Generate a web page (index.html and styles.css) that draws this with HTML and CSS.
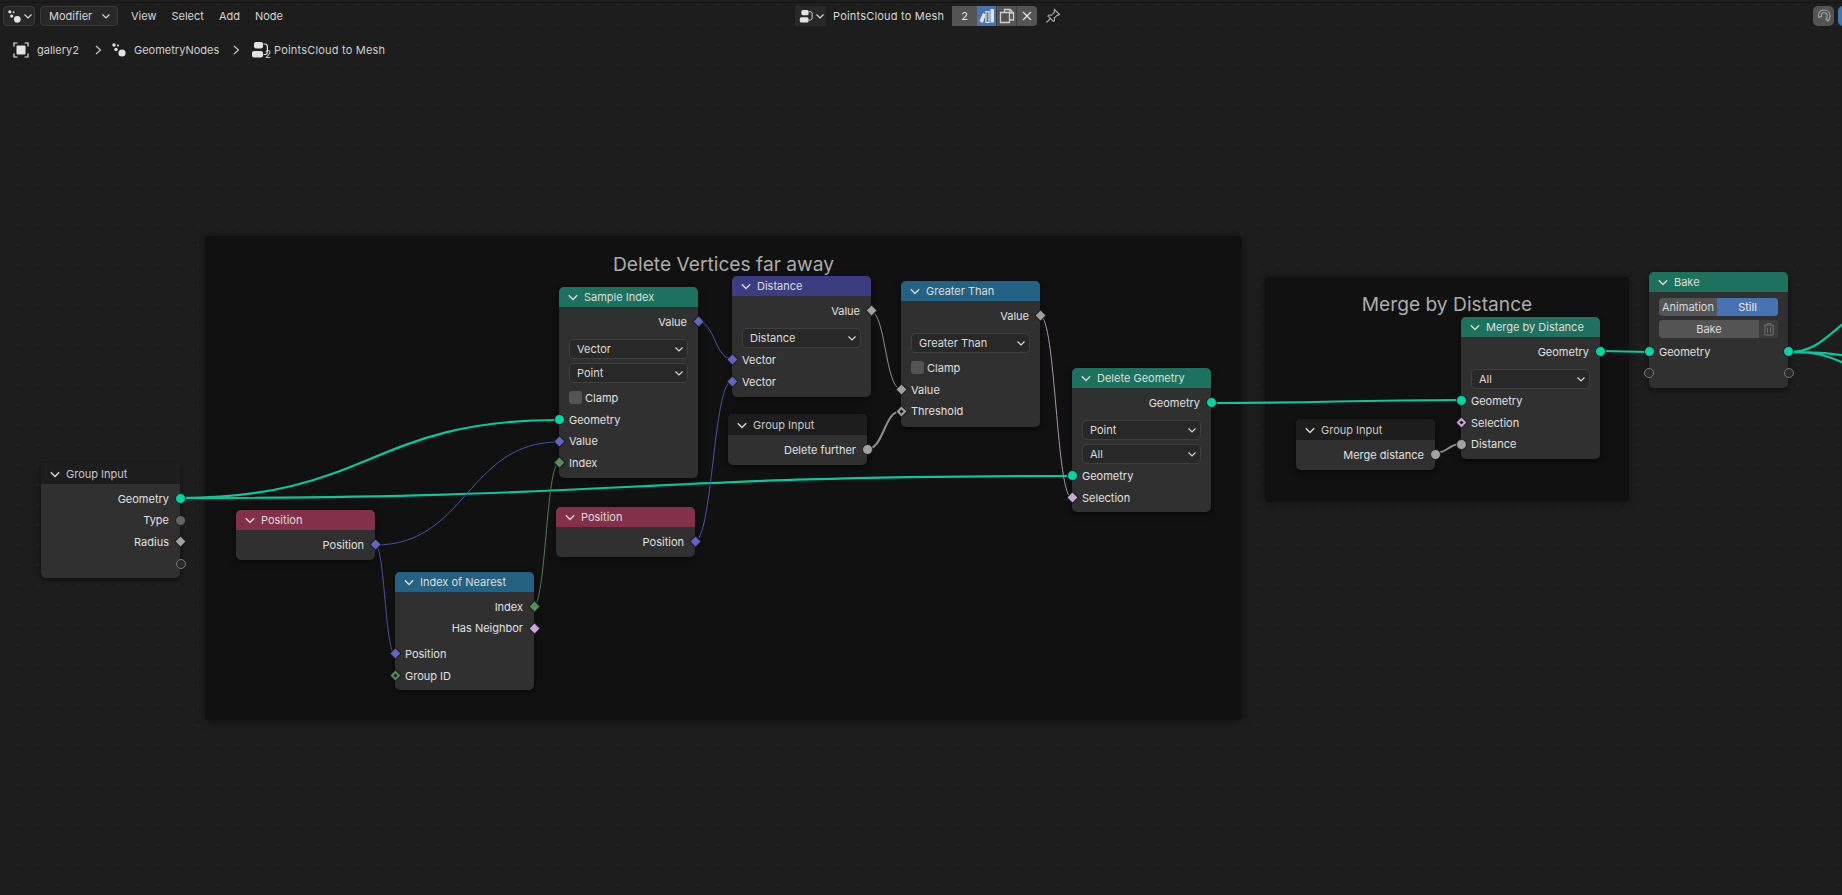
FILE: index.html
```html
<!DOCTYPE html>
<html lang="en">
<head>
    <meta charset="UTF-8">
    <title>PointsCloud to Mesh</title>
    <link rel="stylesheet" href="styles.css">
</head>
<body>
    <svg class="defs" width="0" height="0">
        <symbol id="ico-nodes" viewBox="0 0 16 16">
            <circle cx="3" cy="3" r="1.7"/>
            <circle cx="7" cy="3.400" r="1"/>
            <circle cx="5" cy="7.500" r="1.700"/>
            <circle cx="11" cy="11" r="3.600"/>
        </symbol>
        <symbol id="ico-group" viewBox="0 0 20 18">
            <rect x="3" y="1" width="9" height="6.500" rx="2"/>
            <rect x="1" y="10" width="11" height="6.500" rx="2"/>
            <path class="ico-line" d="M12.500 3h1.500c1.500 0 2.400 1 2.400 3v4c0 2-1 3.500-2.400 3.500h-1.500"/>
        </symbol>
        <symbol id="ico-chev" viewBox="0 0 10 10">
            <path class="ico-line" d="M1.500 3.500L5 7l3.500-3.500"/>
        </symbol>
        <symbol id="ico-next" viewBox="0 0 10 10">
            <path class="ico-line" d="M3 1l4.500 4L3 9"/>
        </symbol>
    </svg>

    <div class="canvas">
        <div class="topbar">
            <div class="btn editor-btn">
                <svg class="ico16"><use href="#ico-nodes"/></svg>
                <svg class="chev"><use href="#ico-chev"/></svg>
            </div>
            <div class="btn mode-btn">
                <span>Modifier</span>
                <svg class="chev"><use href="#ico-chev"/></svg>
            </div>
            <nav class="menu">
                <span>View</span>
                <span>Select</span>
                <span>Add</span>
                <span>Node</span>
            </nav>
            <div class="picker">
                <div class="pick-icon">
                    <svg class="ico-grp"><use href="#ico-group"/></svg>
                    <svg class="chev"><use href="#ico-chev"/></svg>
                </div>
                <div class="pick-name">PointsCloud to Mesh</div>
                <div class="pick-count">2</div>
                <div class="pick-asset">
                    <svg width="16" height="16" viewBox="0 0 16 16">
                        <path class="fill-w" d="M.5 12.500L4 5l2 1v3l-2 5.500h-2z"/>
                        <path class="line-w" d="M7 3.500h3v11h-3z"/>
                        <path class="fill-w" d="M11.500 1h3.500v13.500h-3.500z"/>
                    </svg>
                </div>
                <div class="pick-tool">
                    <svg width="16" height="16" viewBox="0 0 16 16">
                        <path class="line-g thick" d="M5.500 4.500v-3h5.500l3.500 3.500v7h-3.500"/>
                        <path class="line-g thick" d="M11 1.500v3.500h3.500"/>
                        <path class="line-g thick" d="M1.500 4.500h9v10h-9z"/>
                    </svg>
                </div>
                <div class="pick-tool pick-x">
                    <svg width="12" height="12" viewBox="0 0 12 12">
                        <path class="line-w" d="M2 2l8 8M10 2l-8 8"/>
                    </svg>
                </div>
            </div>
            <svg class="pin" width="16" height="16" viewBox="0 0 16 16">
                <path class="line-g" d="M9.500 1.500l5 5-1.200.8-1-.3-3 3 .2 2.500-1 1-5.500-5.500 1-1 2.500.2 3-3-.3-1zM5.500 10.500L1.500 14.500"/>
            </svg>
            <div class="snap-btn">
                <svg width="16" height="16" viewBox="0 0 16 16">
                    <path class="line-g" d="M3 9.500c-1.500-4 1-7.500 5-7.500 3.500 0 6 2.500 6 6 0 2-.8 3.800-2 5l-2-2c.8-.8 1.200-1.900 1.200-3 0-2-1.500-3.200-3.200-3.200-2.200 0-3 1.700-2.400 3.500z"/>
                </svg>
            </div>
            <div class="blue-btn"></div>
        </div>

        <div class="crumbs">
            <svg class="crumb-obj" width="16" height="16" viewBox="0 0 16 16">
                <path class="line-w" d="M1 4.500V1h3.500M11.500 1H15v3.500M15 11.500V15h-3.500M4.500 15H1v-3.500"/>
                <rect class="fill-w" x="3.500" y="3.500" width="9" height="9" rx="1"/>
            </svg>
            <span class="crumb-a">gallery2</span>
            <svg class="crumb-next"><use href="#ico-next"/></svg>
            <svg class="ico16"><use href="#ico-nodes"/></svg>
            <span class="crumb-b">GeometryNodes</span>
            <svg class="crumb-next"><use href="#ico-next"/></svg>
            <span class="crumb-grp">
                <svg class="ico-grp"><use href="#ico-group"/></svg>
                <em>2</em>
            </span>
            <span class="crumb-c">PointsCloud to Mesh</span>
        </div>

        <div class="frame frame-delete"><h2>Delete Vertices far away</h2></div>
        <div class="frame frame-merge"><h2>Merge by Distance</h2></div>

        <svg class="wires" width="1842" height="895" viewBox="0 0 1842 895">
            <g class="w-geo">
                <path d="M180 498C370 498 370 420 559 420"/>
                <path d="M180 498C626 498 626 476 1072 476"/>
                <path d="M1211 403C1336 403 1336 400 1461 400"/>
                <path d="M1600 351C1625 351 1625 352 1649 352"/>
                <path d="M1788 352C1815 352 1825 338 1850 318"/>
                <path d="M1788 352C1815 352 1825 353 1850 356"/>
                <path d="M1788 352C1815 352 1825 354 1850 366"/>
            </g>
            <g class="w-vec">
                <path d="M375 545C467 545 467 442 559 442"/>
                <path d="M375 545C385 545 385 654 395 654"/>
                <path d="M698 322C715 322 715 359 732 359"/>
                <path d="M694 542C713 542 713 381 732 381"/>
            </g>
            <path class="w-int" d="M533 607C546 607 546 463 559 463"/>
            <path class="w-flt" d="M870 311C886 311 885 389 901 389"/>
            <path class="w-flt thick" d="M867 449C884 449 884 411 901 411"/>
            <path class="w-flt thick" d="M1435 453C1448 453 1448 444 1461 444"/>
            <path class="w-sel" d="M1040 316C1056 316 1056 498 1072 498"/>
        </svg>

        <div class="node n-input1">
            <div class="head h-input"><svg class="chev"><use href="#ico-chev"/></svg>Group Input</div>
            <div class="body">
                <div class="row out"><span>Geometry</span><i class="sock r geo"></i></div>
                <div class="row out"><span>Type</span><i class="sock r str"></i></div>
                <div class="row out"><span>Radius</span><i class="sock r dia flt"></i></div>
                <div class="row out"><i class="sock r empty"></i></div>
            </div>
        </div>

        <div class="node n-pos1">
            <div class="head h-attr"><svg class="chev"><use href="#ico-chev"/></svg>Position</div>
            <div class="body">
                <div class="row out"><span>Position</span><i class="sock r dia vec"></i></div>
            </div>
        </div>

        <div class="node n-nearest">
            <div class="head h-conv"><svg class="chev"><use href="#ico-chev"/></svg>Index of Nearest</div>
            <div class="body">
                <div class="row out"><span>Index</span><i class="sock r dia int"></i></div>
                <div class="row out"><span>Has Neighbor</span><i class="sock r dia bool"></i></div>
                <div class="row gap"><i class="sock l dia vec"></i><span>Position</span></div>
                <div class="row"><i class="sock l dia int dot"></i><span>Group ID</span></div>
            </div>
        </div>

        <div class="node n-sample">
            <div class="head h-geo"><svg class="chev"><use href="#ico-chev"/></svg>Sample Index</div>
            <div class="body">
                <div class="row out"><span>Value</span><i class="sock r dia vec"></i></div>
                <div class="select first">Vector<svg class="chev"><use href="#ico-chev"/></svg></div>
                <div class="select">Point<svg class="chev"><use href="#ico-chev"/></svg></div>
                <div class="row check"><b></b><span>Clamp</span></div>
                <div class="row"><i class="sock l geo"></i><span>Geometry</span></div>
                <div class="row"><i class="sock l dia vec"></i><span>Value</span></div>
                <div class="row"><i class="sock l dia int"></i><span>Index</span></div>
            </div>
        </div>

        <div class="node n-dist">
            <div class="head h-vec"><svg class="chev"><use href="#ico-chev"/></svg>Distance</div>
            <div class="body tall">
                <div class="row out"><span>Value</span><i class="sock r dia flt"></i></div>
                <div class="select first">Distance<svg class="chev"><use href="#ico-chev"/></svg></div>
                <div class="row after"><i class="sock l dia vec"></i><span>Vector</span></div>
                <div class="row"><i class="sock l dia vec"></i><span>Vector</span></div>
            </div>
        </div>

        <div class="node n-greater">
            <div class="head h-conv"><svg class="chev"><use href="#ico-chev"/></svg>Greater Than</div>
            <div class="body tall">
                <div class="row out"><span>Value</span><i class="sock r dia flt"></i></div>
                <div class="select first">Greater Than<svg class="chev"><use href="#ico-chev"/></svg></div>
                <div class="row check"><b></b><span>Clamp</span></div>
                <div class="row"><i class="sock l dia flt"></i><span>Value</span></div>
                <div class="row"><i class="sock l dia flt dot"></i><span>Threshold</span></div>
            </div>
        </div>

        <div class="node n-input2">
            <div class="head h-input"><svg class="chev"><use href="#ico-chev"/></svg>Group Input</div>
            <div class="body">
                <div class="row out"><span>Delete further</span><i class="sock r flt"></i></div>
            </div>
        </div>

        <div class="node n-pos2">
            <div class="head h-attr"><svg class="chev"><use href="#ico-chev"/></svg>Position</div>
            <div class="body">
                <div class="row out"><span>Position</span><i class="sock r dia vec"></i></div>
            </div>
        </div>

        <div class="node n-delete">
            <div class="head h-geo"><svg class="chev"><use href="#ico-chev"/></svg>Delete Geometry</div>
            <div class="body">
                <div class="row out"><span>Geometry</span><i class="sock r geo"></i></div>
                <div class="select first">Point<svg class="chev"><use href="#ico-chev"/></svg></div>
                <div class="select">All<svg class="chev"><use href="#ico-chev"/></svg></div>
                <div class="row after"><i class="sock l geo"></i><span>Geometry</span></div>
                <div class="row"><i class="sock l dia bool"></i><span>Selection</span></div>
            </div>
        </div>

        <div class="node n-input3">
            <div class="head h-input"><svg class="chev"><use href="#ico-chev"/></svg>Group Input</div>
            <div class="body">
                <div class="row out"><span>Merge distance</span><i class="sock r flt"></i></div>
            </div>
        </div>

        <div class="node n-merge">
            <div class="head h-geo"><svg class="chev"><use href="#ico-chev"/></svg>Merge by Distance</div>
            <div class="body">
                <div class="row out"><span>Geometry</span><i class="sock r geo"></i></div>
                <div class="select first">All<svg class="chev"><use href="#ico-chev"/></svg></div>
                <div class="row after"><i class="sock l geo"></i><span>Geometry</span></div>
                <div class="row"><i class="sock l dia bool dot"></i><span>Selection</span></div>
                <div class="row"><i class="sock l flt"></i><span>Distance</span></div>
            </div>
        </div>

        <div class="node n-bake">
            <div class="head h-geo"><svg class="chev"><use href="#ico-chev"/></svg>Bake</div>
            <div class="body">
                <div class="seg">
                    <span class="seg-off">Animation</span>
                    <span class="seg-on">Still</span>
                </div>
                <div class="seg">
                    <span class="seg-bake">Bake</span>
                    <span class="seg-trash">
                        <svg width="12" height="14" viewBox="0 0 12 14">
                            <path class="line-trash" d="M1 3h10M4.500 3V1.500h3V3M2 3v10h8V3M4.500 5.500v5M7.500 5.500v5"/>
                        </svg>
                    </span>
                </div>
                <div class="row bake-row"><i class="sock l geo"></i><span>Geometry</span><i class="sock r geo"></i></div>
                <div class="row"><i class="sock l empty"></i><i class="sock r empty"></i></div>
            </div>
        </div>
    </div>
</body>
</html>
```

FILE: styles.css
```css
body {
    margin: 0;
    background: #1d1d1d;
    font-family: Inter, "Liberation Sans", sans-serif;
    font-size: 11px;
    color: #dcdcdc;
    overflow: hidden;
}
.defs {
    position: absolute;
}
.canvas {
    position: relative;
    width: 1842px;
    height: 895px;
    overflow: hidden;
    background-color: #1d1d1d;
    background-image: radial-gradient(circle, #232323 0.8px, transparent 1px);
    background-size: 20px 20px;
    background-position: 8px -5px;
}
.ico-line {
    fill: none;
    stroke: currentColor;
    stroke-width: 1.2;
}
.fill-w {
    fill: #e4e4e4;
}
.line-w {
    fill: none;
    stroke: #e4e4e4;
    stroke-width: 1.2;
}
.line-g {
    fill: none;
    stroke: #a8a8a8;
    stroke-width: 1.1;
}
.line-g.thick {
    stroke: #cfcfcf;
    stroke-width: 1.3;
}
.line-trash {
    fill: none;
    stroke: #6e6e6e;
    stroke-width: 1;
}
.ico16 {
    width: 16px;
    height: 16px;
    fill: #e2e2e2;
    flex: none;
}
.ico-grp {
    width: 20px;
    height: 18px;
    fill: #e2e2e2;
    color: #e2e2e2;
    flex: none;
}
.chev {
    width: 10px;
    height: 10px;
    color: #d8d8d8;
    flex: none;
}

/* top bar */
.topbar {
    display: flex;
    align-items: center;
    height: 20px;
    margin-top: 2px;
    padding: 3px 0 0 3px;
    border-top: 1px solid #141414;
}
.topbar > * {
    flex: none;
}
.btn {
    display: flex;
    align-items: center;
    height: 20px;
    box-sizing: border-box;
    border: 1px solid #3a3a3a;
    border-radius: 4px;
    background: #282828;
}
.editor-btn {
    width: 32px;
    gap: 1px;
    padding-left: 3px;
}
.editor-btn .ico16 {
    width: 15px;
    height: 15px;
}
.mode-btn {
    width: 78px;
    margin-left: 5px;
    padding: 0 6px 0 8px;
    justify-content: space-between;
    color: #d6d6d6;
}
.menu {
    display: flex;
    gap: 15px;
    width: 664px;
    margin-left: 13px;
    color: #d6d6d6;
}
.picker {
    display: flex;
    align-items: stretch;
    height: 20px;
    width: 242px;
    border-radius: 4px;
    overflow: hidden;
    background: #545454;
}
.pick-icon {
    width: 31px;
    display: flex;
    align-items: center;
    padding-left: 4px;
    box-sizing: border-box;
    background: #282828;
}
.pick-icon .ico-grp {
    width: 16px;
    height: 15px;
}
.pick-name {
    width: 126px;
    padding-left: 7px;
    box-sizing: border-box;
    line-height: 20px;
    background: #1d1d1d;
    color: #d8d8d8;
    white-space: nowrap;
    letter-spacing: 0.2px;
}
.pick-count {
    width: 25px;
    text-align: center;
    line-height: 20px;
    color: #e6e6e6;
}
.pick-asset {
    width: 19px;
    display: flex;
    align-items: center;
    justify-content: center;
    background: #4772b3;
}
.pick-tool {
    width: 20px;
    display: flex;
    align-items: center;
    justify-content: center;
    border-left: 1px solid #3c3c3c;
    box-sizing: border-box;
}
.pick-x {
    width: 21px;
}
.pin {
    margin-left: 8px;
}
.snap-btn {
    width: 21px;
    height: 20px;
    margin-left: 752px;
    display: flex;
    align-items: center;
    justify-content: center;
    background: #545454;
    border-radius: 5px;
}
.blue-btn {
    width: 20px;
    height: 20px;
    margin-left: 4px;
    background: #4772b3;
    border-radius: 5px;
}

/* breadcrumbs */
.crumbs {
    display: flex;
    align-items: center;
    height: 20px;
    margin-top: 14px;
    padding-left: 13px;
    color: #d0d0d0;
}
.crumb-a {
    margin-left: 8px;
    width: 56px;
}
.crumb-b {
    margin-left: 7px;
    width: 97px;
}
.crumb-c {
    letter-spacing: 0.2px;
}
.crumb-next {
    width: 10px;
    height: 10px;
    color: #c4c4c4;
    margin-right: 8px;
    flex: none;
}
.crumb-grp {
    position: relative;
    width: 23px;
    margin-left: 2px;
    display: flex;
    flex: none;
}
.crumb-grp em {
    position: absolute;
    left: 14px;
    top: 7px;
    font-style: normal;
    font-size: 10px;
}

/* frames */
.frame {
    position: absolute;
    background: #111111;
    border-radius: 4px;
    box-shadow: 0 1px 10px rgba(0, 0, 0, 0.4);
}
.frame h2 {
    margin: 0;
    text-align: center;
    font-weight: 400;
    font-size: 19.200px;
    line-height: 24px;
    color: #acacac;
}
.frame-delete {
    left: 205px;
    top: 236px;
    width: 1037px;
    height: 484px;
    padding-top: 16px;
    box-sizing: border-box;
}
.frame-merge {
    left: 1265px;
    top: 277px;
    width: 364px;
    height: 225px;
    padding-top: 15px;
    box-sizing: border-box;
}

/* wires */
.wires {
    position: absolute;
    left: 0;
    top: 0;
}
.wires path {
    fill: none;
}
.w-geo path {
    stroke: #0cc79b;
    stroke-width: 2.2;
}
.w-vec path {
    stroke: #4f4fa6;
    stroke-width: 1;
}
.w-int {
    stroke: #4f7d52;
    stroke-width: 1;
}
.w-flt {
    stroke: #8f8f8f;
    stroke-width: 1;
}
.w-flt.thick {
    stroke-width: 2;
}
.w-sel {
    stroke: #a796ae;
    stroke-width: 1;
}

/* nodes */
.node {
    position: absolute;
    width: 139px;
    border-radius: 5px;
    background: #303030;
    box-shadow: 0 2px 6px rgba(0, 0, 0, 0.55);
}
.head {
    display: flex;
    align-items: center;
    height: 20px;
    padding-left: 8px;
    gap: 5px;
    border-radius: 5px 5px 0 0;
    color: #dedede;
}
.head .chev {
    width: 12px;
    height: 12px;
}
.h-geo {
    background: #1d725e;
}
.h-attr {
    background: #83314a;
}
.h-conv {
    background: #246283;
}
.h-vec {
    background: #3c3c83;
}
.h-input {
    background: #1d1d1d;
    height: 21px;
    color: #c8c8c8;
}
.body {
    padding: 4px 0;
}
.body.tall {
    padding-bottom: 5px;
}
.row {
    position: relative;
    display: flex;
    align-items: center;
    height: 21.600px;
    padding: 0 10px;
    color: #e0e0e0;
}
.row.out {
    justify-content: flex-end;
    padding-right: 11px;
}
.row.gap {
    margin-top: 4px;
}
.row.after {
    margin-top: 1.600px;
}
.row.check {
    margin-top: 4.600px;
    gap: 3px;
}
.row.check b {
    width: 13px;
    height: 13px;
    border-radius: 3px;
    background: #545454;
}
.bake-row {
    margin-top: 3px;
}
.select {
    display: flex;
    align-items: center;
    justify-content: space-between;
    height: 20px;
    margin: 4px 10px 0;
    padding: 0 3px 0 7px;
    box-sizing: border-box;
    border: 1px solid #3f3f3f;
    border-radius: 4px;
    background: #282828;
    color: #dcdcdc;
}
.select.first {
    margin-top: 6px;
}
.seg {
    display: flex;
    height: 18px;
    margin: 2px 10px 4px;
    border-radius: 4px;
    overflow: hidden;
    line-height: 18px;
    text-align: center;
    background: #545454;
}
.seg + .seg {
    margin-top: 0;
    margin-bottom: 0;
}
.seg-off {
    width: 58px;
}
.seg-on {
    flex: 1;
    background: #4772b3;
    color: #f0f0f0;
}
.seg-bake {
    flex: 1;
}
.seg-trash {
    width: 19px;
    display: flex;
    align-items: center;
    justify-content: center;
    background: #3d3d3d;
}

/* sockets */
.sock {
    position: absolute;
    top: 50%;
    width: 9px;
    height: 9px;
    margin-top: -5.500px;
    border: 1px solid #1a1a1a;
    border-radius: 50%;
}
.sock.r {
    right: -5.500px;
}
.sock.l {
    left: -5.500px;
}
.sock.dia {
    width: 7px;
    height: 7px;
    margin-top: -4.500px;
    border-radius: 1px;
    transform: rotate(45deg);
}
.sock.r.dia {
    right: -4.500px;
}
.sock.l.dia {
    left: -4.500px;
}
.sock.dot::after {
    content: "";
    position: absolute;
    left: 2px;
    top: 2px;
    width: 3px;
    height: 3px;
    background: #1a1a1a;
}
.geo {
    background: #00d6a3;
}
.str {
    background: #636363;
}
.flt {
    background: #a1a1a1;
}
.vec {
    background: #6363c7;
}
.int {
    background: #598c5c;
}
.bool {
    background: #cca6d6;
}
.sock.empty {
    width: 8px;
    height: 8px;
    margin-top: -5px;
    background: #2a2a2a;
    border-color: #777777;
}

/* node places on the editor canvas */
.n-input1 { left: 41px; top: 463px; }
.n-pos1 { left: 236px; top: 510px; }
.n-nearest { left: 395px; top: 572px; }
.n-sample { left: 559px; top: 287px; }
.n-dist { left: 732px; top: 276px; }
.n-greater { left: 901px; top: 281px; }
.n-input2 { left: 728px; top: 414px; }
.n-pos2 { left: 556px; top: 507px; }
.n-delete { left: 1072px; top: 368px; }
.n-input3 { left: 1296px; top: 419px; }
.n-merge { left: 1461px; top: 317px; }
.n-bake { left: 1649px; top: 272px; }
```
